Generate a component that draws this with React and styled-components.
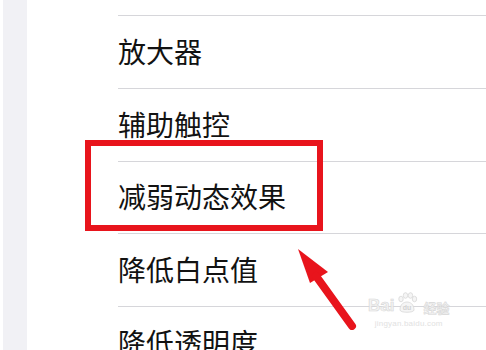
import styled, { createGlobalStyle } from 'styled-components';

const GlobalStyle = createGlobalStyle`
  html, body {
    margin: 0;
    padding: 0;
    background: #fff;
    overflow: hidden;
  }
  body {
    font-family: "Noto Sans CJK SC", "Noto Sans", sans-serif;
  }
`;

const Page = styled.div`
  position: relative;
  display: flex;
  width: 486px;
  height: 350px;
  overflow: hidden;
  background: #fff;
`;

const SideStrip = styled.div`
  width: 24px;
  margin-left: 3px;
  background: #f1f1f5;
  flex-shrink: 0;
`;

const List = styled.div`
  flex: 1;
  padding-top: 15px;
  padding-left: 91px;
`;

const Row = styled.div`
  height: 72.75px;
  box-sizing: border-box;
  border-top: 1px solid #d6d6da;
  display: flex;
  align-items: center;
  font-size: 28px;
  color: #121212;
  line-height: 1;
  padding-bottom: 2px;
`;

const Highlight = styled.div`
  position: absolute;
  left: 85px;
  top: 140px;
  width: 238px;
  height: 91px;
  box-sizing: border-box;
  border: 6px solid #e8141c;
`;

const Arrow = styled.svg`
  position: absolute;
  left: 290px;
  top: 240px;
`;

const Watermark = styled.div`
  position: absolute;
  left: 368px;
  top: 292px;
  display: flex;
  flex-direction: column;
  align-items: center;
  color: #f2f2f2;
  font-family: "Liberation Sans", sans-serif;
  opacity: 0.9;
`;

const Brand = styled.div`
  display: flex;
  align-items: flex-end;
  gap: 2px;
  font-size: 17px;
  font-weight: bold;
  -webkit-text-stroke: 0.6px #d4d4d4;
  line-height: 1;
`;

const BrandCn = styled.span`
  font-family: "Noto Sans CJK SC", sans-serif;
  font-size: 13px;
  margin-left: 3px;
`;

const Url = styled.div`
  margin-top: 5px;
  font-size: 8px;
  color: #dedede;
  letter-spacing: 0.2px;
`;

const items = ['放大器', '辅助触控', '减弱动态效果', '降低白点值', '降低透明度'];

export default function App() {
  return (
    <>
      <GlobalStyle />
      <Page>
        <SideStrip />
        <List>
          {items.map((t) => (
            <Row key={t}>{t}</Row>
          ))}
        </List>
        <Highlight />
        <Arrow width="70" height="90" viewBox="0 0 70 90">
          <polygon points="8,9 38,32 20,43" fill="#e8141c" />
          <line x1="26" y1="36" x2="62" y2="86" stroke="#e8141c" strokeWidth="8" strokeLinecap="round" />
        </Arrow>
        <Watermark>
          <Brand>
            <span>Bai</span>
            <svg width="22" height="22" viewBox="0 0 22 22">
              <g fill="#f4f4f4" stroke="#d4d4d4" strokeWidth="0.8">
                <ellipse cx="5" cy="7" rx="2.2" ry="2.8" />
                <ellipse cx="9.5" cy="3.5" rx="2.2" ry="2.8" />
                <ellipse cx="14.5" cy="3.5" rx="2.2" ry="2.8" />
                <ellipse cx="18.5" cy="7" rx="2.2" ry="2.8" />
                <path d="M4 18 C4 12 8 10 11 10 C14 10 18 12 18 18 C18 21 4 21 4 18 Z" />
              </g>
              <text x="11" y="18" fontSize="7" textAnchor="middle" fill="#cfcfcf" fontFamily="Liberation Sans">du</text>
            </svg>
            <BrandCn>经验</BrandCn>
          </Brand>
          <Url>jingyan.baidu.com</Url>
        </Watermark>
      </Page>
    </>
  );
}
